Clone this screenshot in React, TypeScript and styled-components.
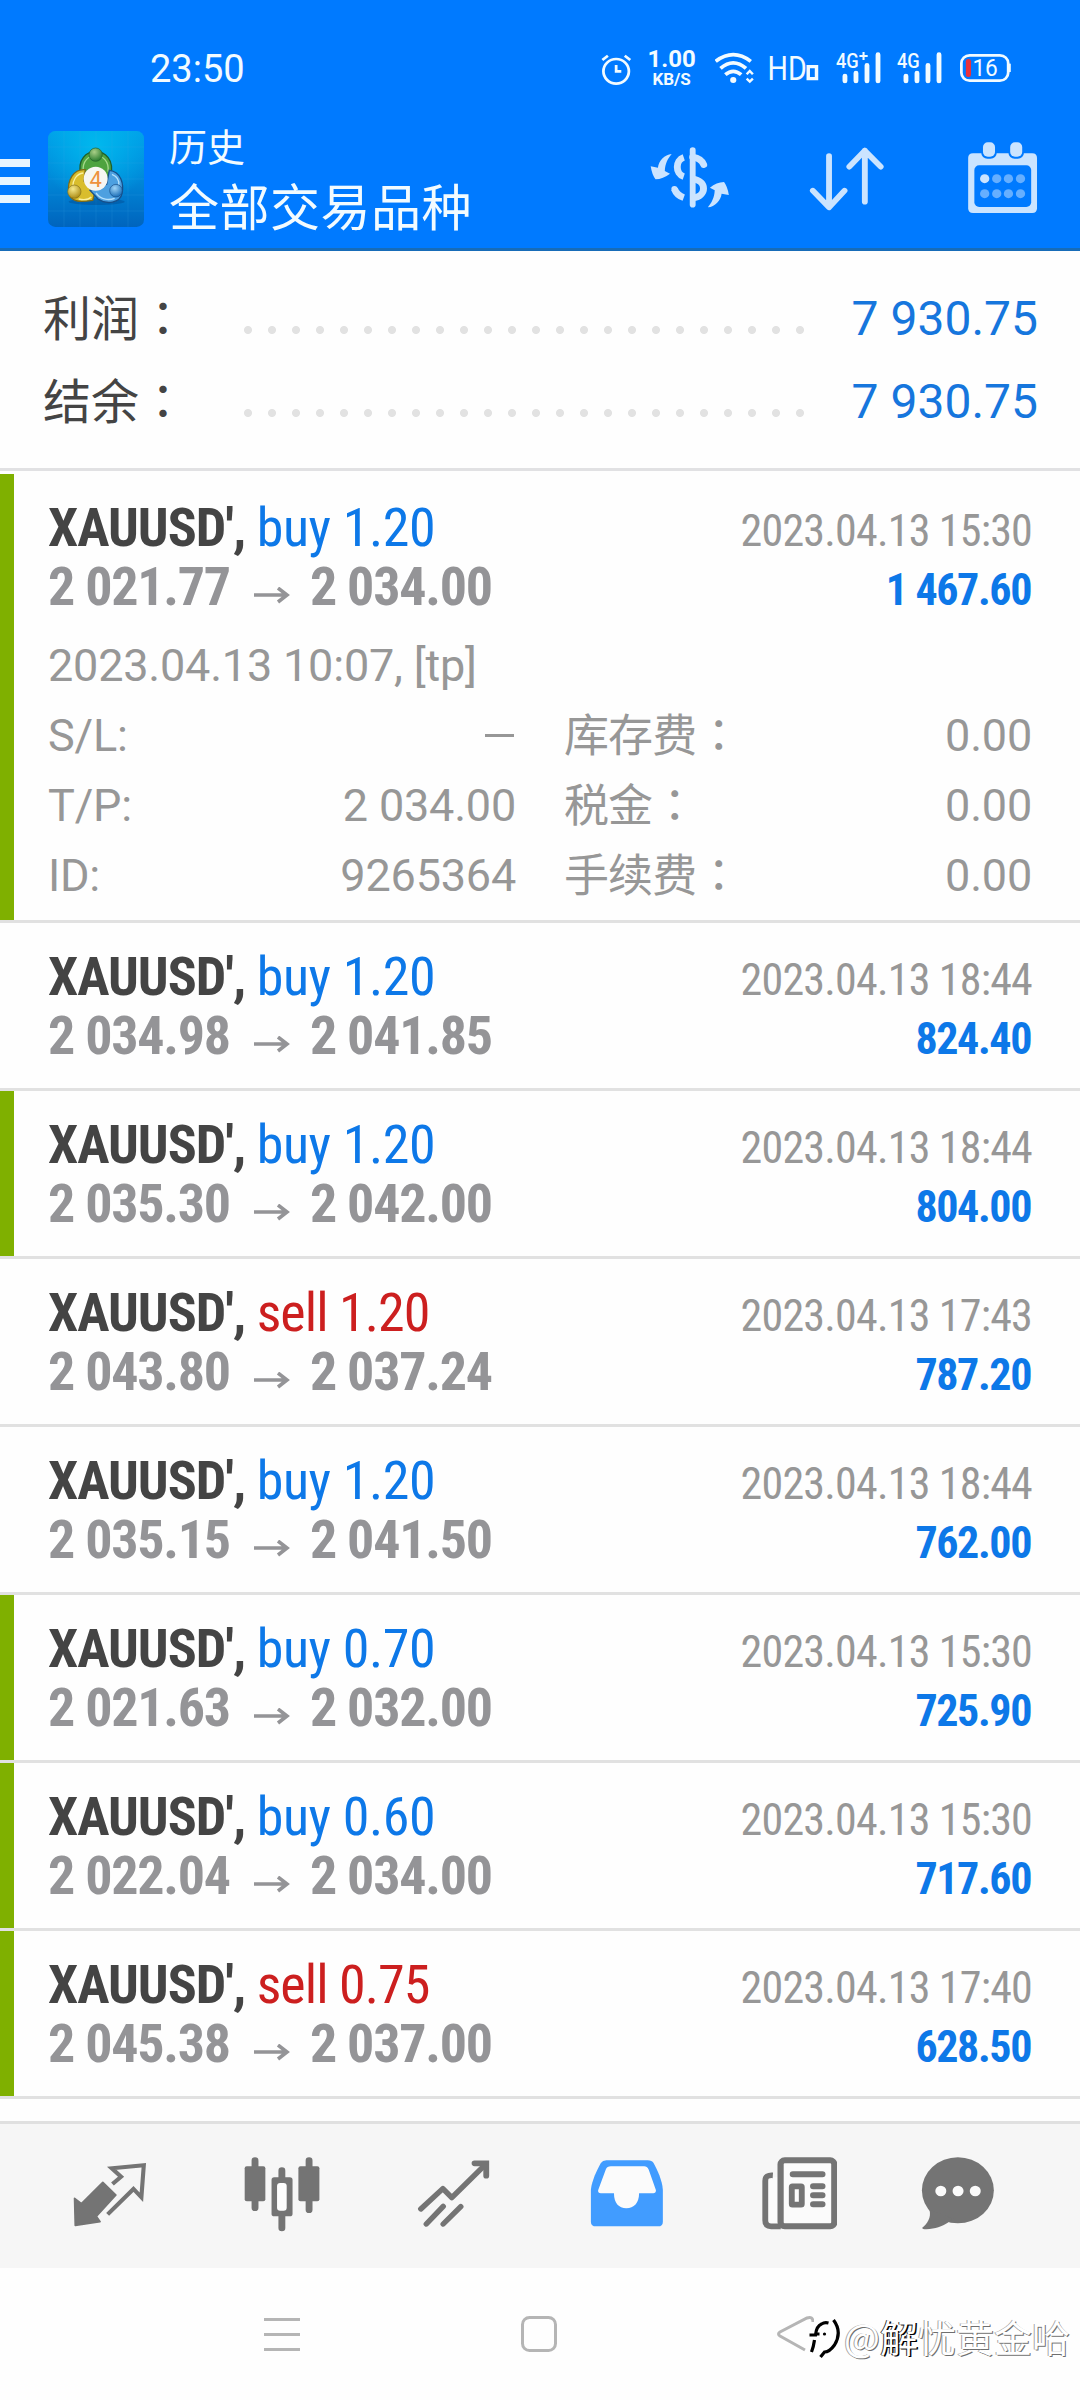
import React from 'react';
import styled, { createGlobalStyle } from 'styled-components';

const Global = createGlobalStyle`
  * { box-sizing: border-box; }
  body { margin: 0; background: #fefefe; font-family: Roboto, "Noto Sans CJK SC", sans-serif; }
  svg { display: block; flex: none; }
`;

const Screen = styled.main`
  position: relative;
  width: 1080px;
  height: 2400px;
  display: flex;
  flex-direction: column;
  background: #fefefe;
  overflow: hidden;
`;

const Header = styled.header`
  height: 251px;
  background: #007aff;
  border-bottom: 3px solid #176cb8;
  color: #f2fbff;
`;

const StatusBar = styled.div`
  height: 110px;
  padding: 27px 69px 0 150px;
  display: flex;
  align-items: center;
`;

const Clock = styled.span`
  font-size: 38px;
  line-height: 44px;
  margin-right: auto;
`;

const StatusIcons = styled.div`
  display: flex;
  align-items: center;
`;

const Speed = styled.div`
  display: flex;
  flex-direction: column;
  align-items: center;
  width: 48px;
  margin: 0 19px 2px 16px;
  font-weight: 700;
  font-size: 24px;
  line-height: 24px;
  small { font-size: 17px; line-height: 17px; }
`;

const Toolbar = styled.div`
  height: 138px;
  display: flex;
  align-items: center;
  padding-right: 38px;
`;

const MenuButton = styled.div`
  width: 30px;
  display: flex;
  flex-direction: column;
  gap: 10px;
  margin: 4px 18px 0 0;
  span { height: 8px; background: #e8f5ff; }
`;

const Titles = styled.div`
  display: flex;
  flex-direction: column;
  margin: 0 auto 7px 25px;
  font-family: "Noto Sans CJK SC", sans-serif;
`;

const Caption = styled.span`
  font-size: 38px;
  line-height: 56px;
`;

const Title = styled.span`
  font-size: 50px;
  line-height: 62px;
  letter-spacing: 0.5px;
  margin-right: -3px;
`;

const Actions = styled.div`
  display: flex;
  gap: 77px;
  margin-bottom: 3px;
`;

const Summary = styled.section`
  height: 220px;
  padding: 26px 42px 0 43px;
  border-bottom: 3px solid #e1e1e3;
`;

const SummaryRow = styled.div`
  display: flex;
  align-items: center;
  height: 83px;
  line-height: 83px;
  font-size: 48px;
`;

const SummaryLabel = styled.span`
  width: 193px;
  color: #444;
  padding-top: 1px;
  font-family: Roboto, "Noto Sans CJK SC", sans-serif;
`;

const Colon = styled.span`
  font-family: "Noto Sans CJK TC", sans-serif;
  line-height: 1;
`;

const Leader = styled.span`
  width: 576px;
  height: 10px;
  margin-top: 23px;
  background: radial-gradient(circle at center, #e2e2e2 3.6px, transparent 4.4px) 0 0 / 24px 10px repeat-x;
`;

const SummaryValue = styled.span`
  margin-left: auto;
  color: #1676dd;
`;

const Deals = styled.section`
  padding-top: 3px;
  flex: 1;
`;

const Deal = styled.article<{ $closed: boolean }>`
  padding: 23.5px 48px 0 34px;
  border-left: 14px solid ${p => (p.$closed ? '#7fb000' : 'transparent')};
  height: 165px;
  &[data-open='true'] { height: 446px; }
`;

const Divider = styled.hr`
  height: 3px;
  margin: 0;
  border: 0;
  background: #e1e1e1;
`;

const Line = styled.div`
  display: flex;
  justify-content: space-between;
  align-items: baseline;
  height: 59px;
  line-height: 59px;
  font-family: "Roboto Condensed", Roboto, sans-serif;
  font-stretch: 75%;
  white-space: pre;
`;

const Instrument = styled.span`
  font-size: 54px;
  font-weight: 700;
  letter-spacing: -1px;
  color: #444;
`;

const Side = styled.span<{ $sell: boolean }>`
  font-weight: 400;
  letter-spacing: ${p => (p.$sell ? '-0.95px' : '-0.4px')};
  color: ${p => (p.$sell ? '#cc1f1f' : '#0d78e8')};
`;

const Prices = styled.span`
  display: flex;
  align-items: baseline;
  font-size: 54px;
  font-weight: 700;
  letter-spacing: -1.25px;
  color: #949497;
`;

const Stamp = styled.span`
  font-size: 44px;
  letter-spacing: -0.8px;
  color: #979797;
`;

const Profit = styled.span`
  font-size: 44px;
  font-weight: 700;
  letter-spacing: -1.4px;
  margin-right: 1px;
  color: #0d78e8;
`;

const Details = styled.div`
  margin-top: 15.5px;
  font-size: 45px;
  line-height: 70px;
  letter-spacing: -0.2px;
  color: #979797;
`;

const DetailRow = styled.div`
  display: grid;
  grid-template-columns: 120px 348px 49px 200px 1fr;
  height: 70px;
  white-space: nowrap;
`;

const Cell = styled.span<{ $col: number; $end?: boolean }>`
  grid-column: ${p => p.$col};
  text-align: ${p => (p.$end ? 'right' : 'left')};
`;

const CellLabel = styled(Cell)`
  padding-top: 1px;
  margin-left: -1px;
  letter-spacing: -0.9px;
`;

const Dash = styled.i`
  display: inline-block;
  width: 29px;
  height: 3px;
  margin-right: 2px;
  vertical-align: 14px;
  background: #979797;
`;

const Tabs = styled.nav`
  height: 147px;
  padding: 0 0 4px 24px;
  border-top: 3px solid #e0e0e0;
  background: #f6f6f6;
  display: grid;
  grid-template-columns: 172px 172px 172px 173px 173px 144px;
  align-items: center;
  justify-items: center;
`;

const SystemBar = styled.div`
  height: 132px;
  display: flex;
  justify-content: space-between;
  padding: 48px 266px 0 264px;
`;

const Watermark = styled.div`
  position: absolute;
  left: 806px;
  top: 2312px;
  display: flex;
  align-items: center;
  color: #fff;
  font-family: "Noto Sans CJK SC", sans-serif;
  font-size: 38px;
  line-height: 48px;
  white-space: nowrap;
  text-shadow: 1px 1px 0 #6f6f6f, -1px 0 0 #a5a5a5;
  b { font-weight: 400; text-shadow: 1.5px 1px 0 #000, -1px -0.5px 0 #333; }
`;

type GlyphProps = { x: number; y: number; w: number; h: number; children: React.ReactNode };

/* Drawings share a grid of 2.904 x 3 units per pixel. */
const Glyph = ({ x, y, w, h, children }: GlyphProps) => (
  <svg width={w / 2.904} height={h / 3} viewBox={`${x} ${y} ${w} ${h}`} preserveAspectRatio="none" fill="none">
    {children}
  </svg>
);

const StatusGlyph = styled.span<{ $gap: number }>`
  margin-left: ${p => p.$gap}px;
`;

const AppLogo = () => (
  <svg width="96" height="96" viewBox="0 0 288 288">
    <defs>
      <linearGradient id="bg" x1="0" y1="0" x2="0" y2="1">
        <stop offset="0" stopColor="#009fe8" />
        <stop offset="0.5" stopColor="#0088d8" />
        <stop offset="1" stopColor="#0064bd" />
      </linearGradient>
      <radialGradient id="glow" cx="0.5" cy="0.15" r="0.6">
        <stop offset="0" stopColor="#00b8ee" />
        <stop offset="1" stopColor="#00b8ee" stopOpacity="0" />
      </radialGradient>
      <radialGradient id="g" cx="0.4" cy="0.3" r="0.7"><stop offset="0" stopColor="#a9cf87" /><stop offset="1" stopColor="#2b7d2f" /></radialGradient>
      <radialGradient id="ye" cx="0.4" cy="0.3" r="0.7"><stop offset="0" stopColor="#f6e98c" /><stop offset="1" stopColor="#ad8d15" /></radialGradient>
      <radialGradient id="bl" cx="0.4" cy="0.3" r="0.7"><stop offset="0" stopColor="#9fd4f7" /><stop offset="1" stopColor="#1c6fb8" /></radialGradient>
    </defs>
    <rect width="288" height="288" rx="22" fill="url(#bg)" />
    <rect width="288" height="288" rx="22" fill="url(#glow)" />
    <path d="M48 0V288M96 0V288M144 0V288M192 0V288M240 0V288M0 48H288M0 96H288M0 144H288M0 192H288M0 240H288" stroke="#3bb0ec" strokeOpacity="0.25" strokeWidth="2" />
    <ellipse cx="146" cy="212" rx="84" ry="10" fill="#003f80" opacity="0.35" />
    <path d="M98 130C88 85 115 62 143 62S200 85 188 136L168 158L120 150Z" fill="#4ea33f" stroke="#1f5f2a" strokeWidth="4" />
    <path d="M106 122C102 90 122 74 143 74S184 90 180 122" fill="none" stroke="#a5d98c" strokeWidth="4" />
    <path d="M112 116C76 112 58 150 62 182S96 214 134 208L142 180L108 150Z" fill="#d9bd2c" stroke="#7d6a18" strokeWidth="4" />
    <path d="M106 126C84 128 74 150 74 168M92 204C110 208 124 204 130 198" fill="none" stroke="#faf0a0" strokeWidth="4" />
    <path d="M184 118C220 122 228 160 222 188S176 222 150 204L126 178L176 160Z" fill="#4da0e0" stroke="#164f8a" strokeWidth="4" />
    <path d="M192 130C210 138 214 150 212 162M144 186C160 208 184 208 200 202" fill="none" stroke="#b5e0fb" strokeWidth="4" />
    <circle cx="143" cy="71" r="20" fill="url(#g)" stroke="#235f28" strokeWidth="2" />
    <circle cx="79" cy="182" r="20" fill="url(#ye)" stroke="#84701b" strokeWidth="2" />
    <circle cx="204" cy="179" r="19" fill="url(#bl)" stroke="#164f8a" strokeWidth="2" />
    <circle cx="143" cy="143" r="36" fill="#f6f6f2" />
    <text x="143" y="167" textAnchor="middle" fontFamily="Roboto" fontSize="66" fill="#ee923e">4</text>
  </svg>
);

const white = '#f2fbff';
const pale = '#cbe4ff';
const grey = '#747474';

const Bars = ({ x }: { x: number }) => (
  <path
    d={`M${x} 228V243M${x + 32} 219V243M${x + 64} 196V243M${x + 96} 164V243`}
    stroke={white} strokeWidth="14" strokeLinecap="round"
  />
);

const StatusRow = () => (
  <StatusIcons>
    <Glyph x={176} y={150} w={89} h={112}>
      <circle cx="220" cy="214" r="37" stroke={white} strokeWidth="8" />
      <path d="M180 180L196 167M245 167L261 180M220 195V214H235" stroke={white} strokeWidth="8" />
    </Glyph>
    <Speed>1.00<small>KB/S</small></Speed>
    <Glyph x={507} y={150} w={115} h={112}>
      <circle cx="560" cy="240" r="9" fill={white} />
      <path d="M509 184Q560 144 611 184M523 205Q560 172 597 205M537 224Q560 204 583 224" stroke={white} strokeWidth="11" />
      <path d="M599 223L608 213L617 223M599 236L608 245L617 236" stroke={white} strokeWidth="7" />
    </Glyph>
    <StatusGlyph $gap={15}>
      <Glyph x={665} y={150} w={145} h={112}>
        <text x="661" y="240" fontFamily="Roboto" fontSize="101" fill={white} textLength="114" lengthAdjust="spacingAndGlyphs">HD</text>
        <path d="M779 200H803V236H779Z" stroke={white} strokeWidth="10" />
      </Glyph>
    </StatusGlyph>
    <StatusGlyph $gap={17}>
      <Glyph x={858} y={150} w={132} h={112}>
        <text x="858" y="205" fontFamily="Roboto" fontWeight="500" fontSize="62" fill={white} textLength="66" lengthAdjust="spacingAndGlyphs">4G</text>
        <path d="M926 168H950M938 156V180" stroke={white} strokeWidth="6" />
        <Bars x={884} />
      </Glyph>
    </StatusGlyph>
    <StatusGlyph $gap={15}>
      <Glyph x={1038} y={150} w={132} h={112}>
        <text x="1038" y="205" fontFamily="Roboto" fontWeight="500" fontSize="62" fill={white} textLength="66" lengthAdjust="spacingAndGlyphs">4G</text>
        <Bars x={1064} />
      </Glyph>
    </StatusGlyph>
    <StatusGlyph $gap={18}>
      <Glyph x={1221} y={150} w={148} h={112}>
        <rect x="1225" y="166" width="136" height="76" rx="24" stroke={white} strokeWidth="8" />
        <path d="M1365 191V216" stroke={white} strokeWidth="7" />
        <rect x="1238" y="177" width="15" height="54" rx="7" fill="#e8323c" />
        <text x="1257" y="228" fontFamily="Roboto" fontSize="70" fill={white} textLength="74" lengthAdjust="spacingAndGlyphs">16</text>
      </Glyph>
    </StatusGlyph>
  </StatusIcons>
);

const ActionIcons = () => (
  <Actions>
    <Glyph x={320} y={425} w={230} h={215}>
      <g stroke={pale} strokeWidth="20">
        <path d="M444 449V613" strokeWidth="17" strokeLinecap="round" />
        <path d="M418 471C393 479 393 521 418 529M444 536C486 541 486 588 444 593" />
        <path d="M444 470Q469 474 476 493" strokeLinecap="round" />
        <path d="M391 566Q398 585 418 592" />
        <circle cx="391" cy="566" r="9" strokeWidth="0" fill={pale} />
      </g>
      <path d="M383 461C362 463 345 482 343 502L322 498Q326 524 336 537Q358 536 378 520L363 512C364 490 372 474 383 461Z" fill={pale} />
      <path d="M488 621C509 619 526 600 528 580L549 584Q545 558 535 545Q513 546 494 562L508 570C507 592 499 608 488 621Z" fill={pale} />
    </Glyph>
    <Glyph x={773} y={425} w={230} h={215}>
      <path d="M837 467V619M790 571L837 621L882 571M941 604V451M896 499L941 451L987 499" stroke={pale} strokeWidth="17" strokeLinecap="round" strokeLinejoin="round" />
    </Glyph>
    <Glyph x={1228} y={425} w={230} h={215}>
      <path d="M1257 459H1429Q1443 459 1443 473V624Q1443 638 1429 638H1257Q1243 638 1243 624V473Q1243 459 1257 459Z" fill={pale} />
      <rect x="1261" y="495" width="165" height="125" rx="14" fill="#007aff" />
      <rect x="1281" y="419" width="45" height="56" rx="18" fill="#007aff" />
      <rect x="1360" y="419" width="45" height="56" rx="18" fill="#007aff" />
      <rect x="1286" y="426" width="35" height="43" rx="14" fill={pale} />
      <rect x="1365" y="426" width="35" height="43" rx="14" fill={pale} />
      {[535, 580].map(y => [1291, 1326, 1360, 1395].map(x => (
        <circle key={`${x}-${y}`} cx={x} cy={y} r="13.5" fill={x === 1291 && y === 535 ? pale : '#66afff'} />
      )))}
    </Glyph>
  </Actions>
);

const TabIcons = () => (
  <>
    <Glyph x={209.5} y={230} w={220} h={225}>
      <path d="M217 354L237 370L299 306L337 344L280 408L291 424L219 435Z" fill={grey} stroke={grey} strokeWidth="5" strokeLinejoin="round" />
      <path d="M327 311L352 289L325 264L418 255L411 351L388 326L313 402" stroke={grey} strokeWidth="12" />
    </Glyph>
    <Glyph x={707} y={230} w={220} h={225}>
      <path d="M739 241V382M896 241V388M817 271V443" stroke={grey} strokeWidth="20" strokeLinecap="round" />
      <rect x="709" y="258" width="60" height="105" rx="6" fill={grey} />
      <rect x="865" y="258" width="61" height="105" rx="6" fill={grey} />
      <rect x="787" y="291" width="61" height="117" rx="8" fill={grey} />
      <rect x="803" y="308" width="28" height="83" rx="9" fill="#fdfdfd" />
    </Glyph>
    <Glyph x={1207} y={230} w={220} h={225}>
      <path d="M1221 386L1285 325L1311 352L1409 252M1237 431L1286 378M1286 431L1337 379" stroke={grey} strokeWidth="16" strokeLinecap="round" strokeLinejoin="round" />
      <path d="M1377 249H1411V286" stroke={grey} strokeWidth="17" strokeLinecap="round" />
    </Glyph>
    <Glyph x={141.5} y={230} w={220} h={225}>
      <path d="M147 328C150 300 165 268 176 248Q181 240 192 240H312Q324 240 329 248C340 268 354 300 356 328V424Q356 438 342 438H162Q147 438 147 424Z" fill="#419cff" />
      <path d="M205 258H302Q310 258 315 268L336 330Q336 339 328 339H287C287 368 272 384 250 384S214 368 214 339H176Q167 339 168 330L190 268Q194 258 205 258Z" fill="#fbfbfb" />
    </Glyph>
    <Glyph x={645.5} y={230} w={220} h={225}>
      <path d="M663 290H692V430H663Z" fill="#fbfbfb" />
      <path d="M677 285C663 284 655 288 655 302V420Q655 438 672 438H700" stroke={grey} strokeWidth="17" />
      <rect x="699.5" y="240" width="156" height="198" rx="12" fill="#fbfbfb" stroke={grey} strokeWidth="18" />
      <path d="M735 282H821M794 318H821M794 345H821M794 372H821" stroke={grey} strokeWidth="18" strokeLinecap="round" />
      <rect x="732" y="318" width="29" height="55" rx="2" stroke={grey} strokeWidth="17" />
    </Glyph>
    <Glyph x={1103.5} y={230} w={220} h={225}>
      <ellipse cx="1213.5" cy="330" rx="104.5" ry="99" fill={grey} />
      <path d="M1131 388C1137 412 1124 430 1110 442Q1110 447 1122 447C1148 445 1168 438 1184 427L1200 415Z" fill={grey} />
      {[1164, 1214, 1264].map(x => <circle key={x} cx={x} cy="332" r="16" fill="#fbfbfb" />)}
    </Glyph>
  </>
);

type DealData = { side: string; volume: string; open: string; close: string; time: string; profit: string; closed: boolean };

const deals: DealData[] = [
  { side: 'buy', volume: '1.20', open: '2 021.77', close: '2 034.00', time: '2023.04.13 15:30', profit: '1 467.60', closed: true },
  { side: 'buy', volume: '1.20', open: '2 034.98', close: '2 041.85', time: '2023.04.13 18:44', profit: '824.40', closed: false },
  { side: 'buy', volume: '1.20', open: '2 035.30', close: '2 042.00', time: '2023.04.13 18:44', profit: '804.00', closed: true },
  { side: 'sell', volume: '1.20', open: '2 043.80', close: '2 037.24', time: '2023.04.13 17:43', profit: '787.20', closed: false },
  { side: 'buy', volume: '1.20', open: '2 035.15', close: '2 041.50', time: '2023.04.13 18:44', profit: '762.00', closed: false },
  { side: 'buy', volume: '0.70', open: '2 021.63', close: '2 032.00', time: '2023.04.13 15:30', profit: '725.90', closed: true },
  { side: 'buy', volume: '0.60', open: '2 022.04', close: '2 034.00', time: '2023.04.13 15:30', profit: '717.60', closed: true },
  { side: 'sell', volume: '0.75', open: '2 045.38', close: '2 037.00', time: '2023.04.13 17:40', profit: '628.50', closed: true },
];

const details = [
  { name: 'S/L:', value: '', fee: '库存费', amount: '0.00' },
  { name: 'T/P:', value: '2 034.00', fee: '税金', amount: '0.00' },
  { name: 'ID:', value: '9265364', fee: '手续费', amount: '0.00' },
];

const ArrowBox = styled.span`
  margin: 0 20px 0 24px;
`;

const Arrow = () => (
  <ArrowBox>
    <svg width="36" height="18" viewBox="0 0 36 18" fill="none">
      <path d="M0 8H33M24 1L33 8L24 15" stroke="#949497" strokeWidth="3.6" />
    </svg>
  </ArrowBox>
);

export default function App() {
  return (
    <Screen>
      <Global />
      <Header>
        <StatusBar>
          <Clock>23:50</Clock>
          <StatusRow />
        </StatusBar>
        <Toolbar>
          <MenuButton><span /><span /><span /></MenuButton>
          <AppLogo />
          <Titles>
            <Caption>历史</Caption>
            <Title>全部交易品种</Title>
          </Titles>
          <ActionIcons />
        </Toolbar>
      </Header>
      <Summary>
        {['利润', '结余'].map(label => (
          <SummaryRow key={label}>
            <SummaryLabel>{label}<Colon lang="zh-TW">：</Colon></SummaryLabel>
            <Leader />
            <SummaryValue>7 930.75</SummaryValue>
          </SummaryRow>
        ))}
      </Summary>
      <Deals>
        {deals.map((d, i) => (
          <React.Fragment key={i}>
            <Deal $closed={d.closed} data-open={i === 0}>
              <Line>
                <Instrument>XAUUSD', <Side $sell={d.side === 'sell'}>{d.side} {d.volume}</Side></Instrument>
                <Stamp>{d.time}</Stamp>
              </Line>
              <Line>
                <Prices>{d.open}<Arrow />{d.close}</Prices>
                <Profit>{d.profit}</Profit>
              </Line>
              {i === 0 && (
                <Details>
                  <div>2023.04.13 10:07, [tp]</div>
                  {details.map(row => (
                    <DetailRow key={row.name}>
                      <Cell $col={1}>{row.name}</Cell>
                      <Cell $col={2} $end>{row.value || <Dash />}</Cell>
                      <CellLabel $col={4}>{row.fee}<Colon lang="zh-TW">：</Colon></CellLabel>
                      <Cell $col={5} $end>{row.amount}</Cell>
                    </DetailRow>
                  ))}
                </Details>
              )}
            </Deal>
            <Divider />
          </React.Fragment>
        ))}
      </Deals>
      <Tabs><TabIcons /></Tabs>
      <SystemBar>
        <svg width="36" height="36" viewBox="0 0 36 36"><path d="M0 3.5H36M0 18.5H36M0 33.5H36" stroke="#b5b5b5" strokeWidth="3" /></svg>
        <svg width="36" height="36" viewBox="0 0 36 36"><rect x="1.5" y="1.5" width="33" height="33" rx="7" fill="none" stroke="#b5b5b5" strokeWidth="3" /></svg>
        <svg width="37" height="36" viewBox="0 0 37 36"><path d="M36 6Q36 0 30 2L3 16Q0 18 3 20L28 34" fill="none" stroke="#b5b5b5" strokeWidth="3" /></svg>
      </SystemBar>
      <Watermark>
        <svg width="38" height="44" viewBox="0 0 37 44" fill="none">
          <path d="M0 29L9 12Q14 5 24 6Q36 12 32 28Q28 40 14 44Z" fill="#fefefe" />
          <path d="M3 21H9Q10 12 15 10Q18 8 22 9M9 20H13M8 26Q7 33 5 38M27 6Q36 18 28 31Q23 38 18 38L14 43" stroke="#000" strokeWidth="3.2" />
          <circle cx="18" cy="20" r="1.6" fill="#000" />
        </svg>
        <span>@<b>解</b>忧黄金哈</span>
      </Watermark>
    </Screen>
  );
}
